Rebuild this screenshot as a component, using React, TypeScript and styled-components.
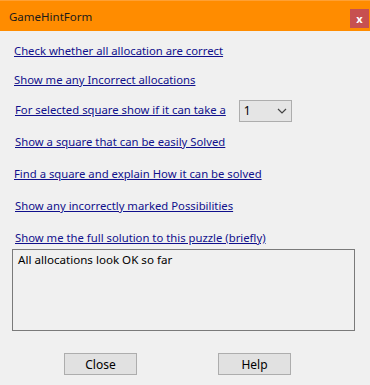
import React from 'react';
import styled, { createGlobalStyle } from 'styled-components';

const GlobalStyle = createGlobalStyle`
  html, body {
    margin: 0;
    padding: 0;
    background: #f0f0f0;
  }
  * {
    box-sizing: border-box;
  }
`;

const Window = styled.div`
  width: 370px;
  height: 385px;
  background: #f0f0f0;
  font-family: 'Noto Sans', 'Open Sans', sans-serif;
  font-size: 11.3px;
  color: #000;
  display: flex;
  flex-direction: column;
`;

const TitleBar = styled.div`
  height: 31px;
  background: #ff8c00;
  border-top: 1px solid #ffa033;
  display: flex;
  align-items: center;
  justify-content: space-between;
  padding: 0 1px 0 9px;
`;

const Title = styled.span`
  font-size: 11.5px;
  color: #1a1a1a;
`;

const CloseBox = styled.div`
  width: 19px;
  height: 19px;
  margin-top: 4px;
  background: #c75050;
  color: #fff;
  font-weight: bold;
  font-size: 11px;
  display: flex;
  align-items: center;
  justify-content: center;
`;

const Body = styled.div`
  padding-top: 12px;
  display: flex;
  flex-direction: column;
`;

const Row = styled.div<{ $h: number; $indent: number }>`
  height: ${(p) => p.$h}px;
  padding-left: ${(p) => p.$indent}px;
  display: flex;
  align-items: flex-start;
  line-height: 16px;
`;

const Link = styled.a`
  color: #10108c;
  text-decoration: underline;
  cursor: pointer;
`;

const Combo = styled.div`
  margin: -2px 0 0 13px;
  width: 53px;
  height: 22px;
  background: #e5e5e5;
  border: 1px solid #adadad;
  display: flex;
  align-items: center;
  justify-content: space-between;
  padding: 0 4px 0 4px;
  line-height: 16px;
  font-size: 12px;
`;

const Output = styled.div`
  margin-left: 12px;
  width: 343px;
  height: 82px;
  border: 1px solid #7a7a7a;
  padding: 2px 5px;
  line-height: 16px;
  font-size: 11.6px;
`;

const ButtonRow = styled.div`
  display: flex;
  gap: 81px;
  padding: 22px 0 0 64px;
`;

const Button = styled.button`
  width: 73px;
  height: 22px;
  background: #e1e1e1;
  border: 1px solid #adadad;
  font-family: inherit;
  font-size: 12px;
  color: #000;
  padding: 0;
`;

const Chevron = () => (
  <svg width="10" height="6" viewBox="0 0 10 6">
    <polyline points="1,1 5,5 9,1" fill="none" stroke="#444" strokeWidth="1.2" />
  </svg>
);

const links: { text: string; h: number; indent: number }[] = [
  { text: 'Check whether all allocation are correct', h: 29, indent: 14 },
  { text: 'Show me any Incorrect allocations', h: 30, indent: 14 },
];

const more: { text: string; h: number; indent: number }[] = [
  { text: 'Show a square that can be easily Solved', h: 32, indent: 15 },
  { text: 'Find a square and explain How it can be solved', h: 32, indent: 14 },
  { text: 'Show any incorrectly marked Possibilities', h: 32, indent: 15 },
  { text: 'Show me the full solution to this puzzle (briefly)', h: 19, indent: 15 },
];

export default function App() {
  return (
    <Window>
      <GlobalStyle />
      <TitleBar>
        <Title>GameHintForm</Title>
        <CloseBox>x</CloseBox>
      </TitleBar>
      <Body>
        {links.map((l) => (
          <Row key={l.text} $h={l.h} $indent={l.indent}>
            <Link>{l.text}</Link>
          </Row>
        ))}
        <Row $h={32} $indent={15}>
          <Link>For selected square show if it can take a</Link>
          <Combo>
            <span>1</span>
            <Chevron />
          </Combo>
        </Row>
        {more.map((l) => (
          <Row key={l.text} $h={l.h} $indent={l.indent}>
            <Link>{l.text}</Link>
          </Row>
        ))}
        <Output>All allocations look OK so far</Output>
        <ButtonRow>
          <Button>Close</Button>
          <Button>Help</Button>
        </ButtonRow>
      </Body>
    </Window>
  );
}
